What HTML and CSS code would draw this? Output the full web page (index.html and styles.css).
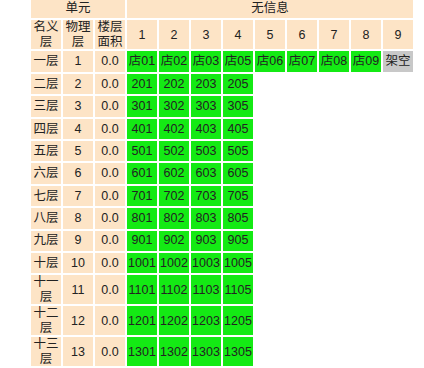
FILE: index.html
```html
<!DOCTYPE html>
<html lang="zh-CN">
<head>
<meta charset="utf-8">
<title>楼层单元</title>
<link rel="stylesheet" href="styles.css">
</head>
<body>
<table class="grid">
  <colgroup>
    <col class="c"><col class="c"><col class="c">
    <col class="c"><col class="c"><col class="c"><col class="c"><col class="c"><col class="c"><col class="c"><col class="c"><col class="c">
  </colgroup>
  <thead>
    <tr class="r1"><th class="hd" colspan="3">单元</th><th class="hd" colspan="9">无信息</th></tr>
    <tr class="r2">
      <th class="hd">名义层</th><th class="hd">物理层</th><th class="hd">楼层面积</th>
      <th class="hd">1</th><th class="hd">2</th><th class="hd">3</th><th class="hd">4</th><th class="hd">5</th><th class="hd">6</th><th class="hd">7</th><th class="hd">8</th><th class="hd">9</th>
    </tr>
  </thead>
  <tbody>
    <tr class="row"><td class="hd">一层</td><td class="hd">1</td><td class="hd">0.0</td><td class="g">店01</td><td class="g">店02</td><td class="g">店03</td><td class="g">店05</td><td class="g">店06</td><td class="g">店07</td><td class="g">店08</td><td class="g">店09</td><td class="x">架空</td></tr>
    <tr class="row"><td class="hd">二层</td><td class="hd">2</td><td class="hd">0.0</td><td class="g">201</td><td class="g">202</td><td class="g">203</td><td class="g">205</td><td></td><td></td><td></td><td></td><td></td></tr>
    <tr class="row"><td class="hd">三层</td><td class="hd">3</td><td class="hd">0.0</td><td class="g">301</td><td class="g">302</td><td class="g">303</td><td class="g">305</td><td></td><td></td><td></td><td></td><td></td></tr>
    <tr class="row"><td class="hd">四层</td><td class="hd">4</td><td class="hd">0.0</td><td class="g">401</td><td class="g">402</td><td class="g">403</td><td class="g">405</td><td></td><td></td><td></td><td></td><td></td></tr>
    <tr class="row"><td class="hd">五层</td><td class="hd">5</td><td class="hd">0.0</td><td class="g">501</td><td class="g">502</td><td class="g">503</td><td class="g">505</td><td></td><td></td><td></td><td></td><td></td></tr>
    <tr class="row"><td class="hd">六层</td><td class="hd">6</td><td class="hd">0.0</td><td class="g">601</td><td class="g">602</td><td class="g">603</td><td class="g">605</td><td></td><td></td><td></td><td></td><td></td></tr>
    <tr class="row"><td class="hd">七层</td><td class="hd">7</td><td class="hd">0.0</td><td class="g">701</td><td class="g">702</td><td class="g">703</td><td class="g">705</td><td></td><td></td><td></td><td></td><td></td></tr>
    <tr class="row"><td class="hd">八层</td><td class="hd">8</td><td class="hd">0.0</td><td class="g">801</td><td class="g">802</td><td class="g">803</td><td class="g">805</td><td></td><td></td><td></td><td></td><td></td></tr>
    <tr class="row"><td class="hd">九层</td><td class="hd">9</td><td class="hd">0.0</td><td class="g">901</td><td class="g">902</td><td class="g">903</td><td class="g">905</td><td></td><td></td><td></td><td></td><td></td></tr>
    <tr class="row"><td class="hd">十层</td><td class="hd">10</td><td class="hd">0.0</td><td class="g">1001</td><td class="g">1002</td><td class="g">1003</td><td class="g">1005</td><td></td><td></td><td></td><td></td><td></td></tr>
    <tr class="row"><td class="hd">十一层</td><td class="hd">11</td><td class="hd">0.0</td><td class="g">1101</td><td class="g">1102</td><td class="g">1103</td><td class="g">1105</td><td></td><td></td><td></td><td></td><td></td></tr>
    <tr class="row"><td class="hd">十二层</td><td class="hd">12</td><td class="hd">0.0</td><td class="g">1201</td><td class="g">1202</td><td class="g">1203</td><td class="g">1205</td><td></td><td></td><td></td><td></td><td></td></tr>
    <tr class="row"><td class="hd">十三层</td><td class="hd">13</td><td class="hd">0.0</td><td class="g">1301</td><td class="g">1302</td><td class="g">1303</td><td class="g">1305</td><td></td><td></td><td></td><td></td><td></td></tr>
  </tbody>
</table>
</body>
</html>
```

FILE: styles.css
```css
html, body {
  margin: 0;
  padding: 0;
  background: #ffffff;
}

.grid {
  margin: -4px 0 0 29px;
  border-collapse: separate;
  border-spacing: 2px;
  table-layout: fixed;
  width: 386px;
  font-family: "Liberation Sans", "Noto Sans CJK SC", sans-serif;
  font-size: 12.5px;
  line-height: 14.5px;
  color: #222;
}

.grid .c {
  width: 30px;
}

.grid th,
.grid td {
  padding: 0;
  text-align: center;
  vertical-align: middle;
  font-weight: normal;
  height: 20.4px;
}

.hd {
  background: #fde4c6;
}

.g {
  background: #14ea14;
}

.x {
  background: #c8c8c8;
}
```
